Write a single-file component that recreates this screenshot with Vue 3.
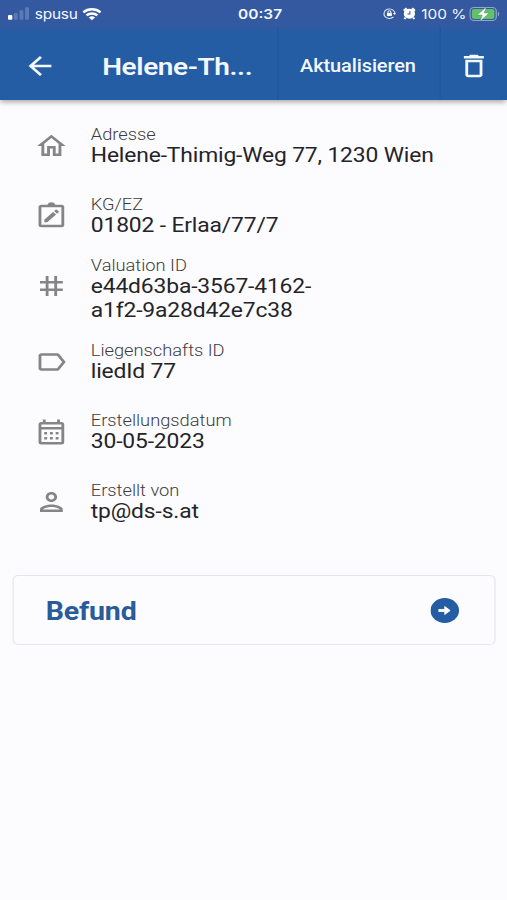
<template>
  <div class="screen">
    <header class="top">
      <div class="status">
        <div class="carrier">
          <svg class="signal" viewBox="0 0 20 13" fill="#fff">
            <rect x="0" y="8" width="4" height="5" rx="1" />
            <rect x="5.3" y="6" width="3.6" height="7" rx="1" opacity=".2" />
            <rect x="10.6" y="3" width="3.6" height="10" rx="1" opacity=".2" />
            <rect x="15.8" y="0" width="3.6" height="13" rx="1" opacity=".2" />
          </svg>
          <span class="provider">spusu</span>
          <svg class="wifi" viewBox="0 0 18 14" fill="none" stroke="#fff" stroke-width="2.5">
            <path d="M1 5.2a11.6 11.6 0 0 1 16 0" />
            <path d="M4 8.4a7.3 7.3 0 0 1 10 0" />
            <path d="M9 13.6 6.1 10.7a4.2 4.2 0 0 1 5.8 0z" fill="#fff" stroke="none" />
          </svg>
        </div>
        <span class="time">00:37</span>
        <div class="indicators">
          <svg class="lock" viewBox="0 0 14 14" fill="none" stroke="#e4eaf6" stroke-width="1.1">
            <path d="M11.2 11A5.6 5.6 0 1 1 12.6 6.4" />
            <path d="M10.6 6.3h3.2l-1.5 2.4z" fill="#fff" stroke="none" />
            <rect x="4.5" y="6.3" width="5" height="3.7" fill="#fff" stroke="none" />
            <path d="M5.5 6.5V5.2a1.5 1.5 0 0 1 3 0v1.3" />
          </svg>
          <svg class="alarm" viewBox="0 0 12 14">
            <circle cx="6" cy="7.2" r="5.4" fill="#fff" />
            <path d="M.6 4 3.4 1.3M11.4 4 8.6 1.3M2.4 11.5 1.2 13M9.6 11.5l1.2 1.5" stroke="#fff" stroke-width="2" />
            <path d="M6.5 4.3v3.2H4.2" fill="none" stroke="#3459a0" stroke-width="1" />
          </svg>
          <span class="percent">100 %</span>
          <svg class="battery" viewBox="0 0 27 15">
            <rect x=".6" y="1" width="23" height="13" rx="3.6" fill="none" stroke="#8fa6cf" stroke-width="1.1" />
            <rect x="2.2" y="2.6" width="19.8" height="9.8" rx="2.2" fill="#62c265" />
            <path d="M25 5.2c1.6.5 1.6 4 0 4.5z" fill="#8fa6cf" />
            <path d="M14.8.4 7 8.5h4.3l-1.8 6.3 7.8-8.3h-4.300z" fill="#fff" stroke="#3f8f66" stroke-width=".4" />
          </svg>
        </div>
      </div>
      <div class="toolbar">
        <svg class="icon back" viewBox="0 0 24 24">
          <path d="M20 11H7.83l5.59-5.59L12 4l-8 8 8 8 1.41-1.41L7.83 13H20v-2z" />
        </svg>
        <h1 class="title">Helene-Th...</h1>
        <button class="update">Aktualisieren</button>
        <button class="delete">
          <svg class="icon" viewBox="0 0 24 24">
            <path d="M6 19c0 1.1.9 2 2 2h8c1.1 0 2-.9 2-2V7H6v12zM8 9h8v10H8V9zm7.5-5-1-1h-5l-1 1H5v2h14V4z" />
          </svg>
        </button>
      </div>
    </header>

    <ul class="details">
      <li v-for="item in items" :key="item.label" class="row">
        <svg class="icon" viewBox="0 0 24 24">
          <path :d="item.icon" fill-rule="evenodd" />
        </svg>
        <div class="text">
          <div class="label">{{ item.label }}</div>
          <div class="value">
            <div v-for="line in item.lines" :key="line">{{ line }}</div>
          </div>
        </div>
      </li>
    </ul>

    <section class="card">
      <h2 class="card-title">Befund</h2>
      <svg class="go" viewBox="0 0 24 24">
        <circle cx="12" cy="12" r="12" fill="#245da4" />
        <path d="M7 11h5V8.2l4.5 3.8-4.5 3.8V13H7z" fill="#fff" stroke="#fff" stroke-width=".8" />
      </svg>
    </section>
  </div>
</template>

<script setup>
const items = [
  {
    label: "Adresse",
    lines: ["Helene-Thimig-Weg 77, 1230 Wien"],
    icon: "m12 5.69 5 4.5V18h-2v-6H9v6H7v-7.81l5-4.5M12 3 2 12h3v8h6v-6h2v6h6v-8h3L12 3z",
  },
  {
    label: "KG/EZ",
    lines: ["01802 - Erlaa/77/7"],
    icon: "M5 3h4.2a3 3 0 0 1 5.6 0H19a2 2 0 0 1 2 2v14a2 2 0 0 1-2 2H5a2 2 0 0 1-2-2V5a2 2 0 0 1 2-2zM5 5v14h14V5zM7 14.9 13.2 8.7l2.1 2.1L9.1 17H7zM13.9 8l1.1-1.1a.6.6 0 0 1 .8 0l1.3 1.3a.6.6 0 0 1 0 .8L16 10.1z",
  },
  {
    label: "Valuation ID",
    lines: ["e44d63ba-3567-4162-", "a1f2-9a28d42e7c38"],
    icon: "M20 10V8h-4V4h-2v4h-4V4H8v4H4v2h4v4H4v2h4v4h2v-4h4v4h2v-4h4v-2h-4v-4h4zm-6 4h-4v-4h4v4z",
  },
  {
    label: "Liegenschafts ID",
    lines: ["liedId 77"],
    icon: "M17.63 5.84C17.27 5.33 16.67 5 16 5L5 5.01C3.9 5.01 3 5.9 3 7v10c0 1.1.9 1.99 2 1.99L16 19c.67 0 1.27-.33 1.63-.84L22 12l-4.37-6.16zM16 17H5V7h11l3.55 5L16 17z",
  },
  {
    label: "Erstellungsdatum",
    lines: ["30-05-2023"],
    icon: "M19 4h-1V2h-2v2H8V2H6v2H5a2 2 0 0 0-2 2v14a2 2 0 0 0 2 2h14a2 2 0 0 0 2-2V6a2 2 0 0 0-2-2zM5 20V10h14v10zM5 8V6h14v2zM7 12h2v2H7zM11 12h2v2h-2zM15 12h2v2h-2zM7 16h2v2H7zM11 16h2v2h-2zM15 16h2v2h-2z",
  },
  {
    label: "Erstellt von",
    lines: ["tp@ds-s.at"],
    icon: "M12 6c1.1 0 2 .9 2 2s-.9 2-2 2-2-.9-2-2 .9-2 2-2m0 10c2.7 0 5.8 1.29 6 2H6c.23-.72 3.31-2 6-2m0-12C9.79 4 8 5.79 8 8s1.79 4 4 4 4-1.79 4-4-1.79-4-4-4zm0 10c-2.67 0-8 1.34-8 4v2h16v-2c0-2.66-5.33-4-8-4z",
  },
];
</script>

<style>
body {
  margin: 0;
  background: #fcfbfe;
}
</style>

<style scoped>
.screen {
  width: 444px;
  height: 900px;
  transform: scaleX(1.1419);
  transform-origin: 0 0;
  background: #fcfbfe;
  font-family: Roboto, "Liberation Sans", sans-serif;
  color: #242428;
}

.top {
  height: 100px;
  background: linear-gradient(#3559a0 0, #3359a1 24px, #245da4 34px);
  box-shadow: 0 2px 5px rgba(0, 0, 0, 0.35);
  color: #f3f8ff;
}

.status {
  display: grid;
  grid-template-columns: 201.5px auto 1fr;
  align-items: center;
  height: 27px;
  padding: 0 6px 0 7px;
  font-family: Inter, Roboto, sans-serif;
  font-size: 13.5px;
}
.carrier,
.indicators {
  display: flex;
  align-items: center;
}
.indicators {
  justify-content: flex-end;
}
.signal {
  width: 19px;
  height: 13px;
}
.provider {
  margin-left: 4.5px;
  letter-spacing: -0.2px;
}
.wifi {
  width: 17px;
  height: 14px;
  margin-left: 4px;
}
.time {
  font-weight: 600;
}
.lock {
  width: 12px;
  height: 13px;
}
.alarm {
  width: 11px;
  height: 13px;
  margin-left: 6px;
}
.percent {
  margin-left: 5px;
}
.battery {
  width: 27px;
  height: 16px;
  margin-left: 2.5px;
}

.icon {
  display: block;
  flex: none;
  width: 30px;
  height: 30px;
  fill: currentColor;
}

.toolbar {
  display: flex;
  align-items: center;
  height: 73px;
}
.toolbar .icon {
  position: relative;
  top: 2px;
}
.back {
  margin-left: 20px;
}
.title {
  width: 153.5px;
  margin: 5px 0 0 39.5px;
  font-size: 24.5px;
  font-weight: 600;
  letter-spacing: -0.35px;
  white-space: nowrap;
}
.update,
.delete {
  box-sizing: border-box;
  height: 73px;
  padding: 5px 2px 0 0;
  border: 0;
  border-left: 1px solid #2057a0;
  background: none;
  color: inherit;
  font: 500 17.5px Roboto, sans-serif;
}
.update {
  width: 142px;
  letter-spacing: -0.1px;
}
.delete {
  flex: 1;
  padding: 0 0 0 13.5px;
}

.details {
  margin: 0;
  padding: 11px 0 0;
  list-style: none;
}
.row {
  display: flex;
  align-items: center;
  padding: 14px 0 14px 29.7px;
}
.row:nth-child(3) {
  padding-top: 5px;
  padding-bottom: 5px;
}
.row:nth-child(3) .icon {
  margin-bottom: 6px;
}
.row .icon {
  color: #858588;
}
.text {
  margin-left: 19.8px;
}
.label {
  padding-top: 1px;
  font-size: 16px;
  font-weight: 300;
  line-height: 17px;
  color: #3c3c40;
}
.value {
  font-size: 20px;
  line-height: 24px;
  letter-spacing: -0.13px;
}

.card {
  display: flex;
  align-items: center;
  justify-content: space-between;
  box-sizing: border-box;
  height: 70px;
  margin: 38px 10px 0 10.5px;
  padding: 0 31px 0 28.5px;
  border: 1.5px solid #e6e5e9;
  border-radius: 5px;
}
.card-title {
  margin: 2px 0 0;
  font-size: 25px;
  font-weight: 700;
  letter-spacing: -0.15px;
  color: #2a5b9b;
}
.go {
  width: 25px;
  height: 25px;
}
</style>
